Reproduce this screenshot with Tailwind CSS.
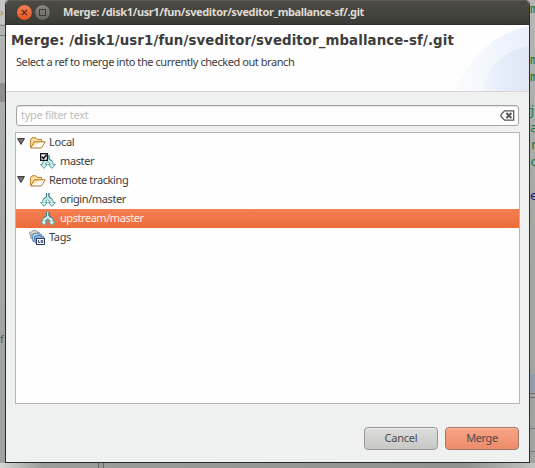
<!DOCTYPE html>
<html lang="en">
<head>
<meta charset="utf-8">
<title>Merge</title>
<script src="https://cdn.jsdelivr.net/npm/@tailwindcss/browser@4"></script>
</head>
<body class="relative h-[468px] w-[535px] overflow-hidden bg-[#a6a8a6] font-['Noto_Sans','Open_Sans',sans-serif] text-[11px] text-[#3c3c3c]">

<!-- Editor window behind the dialog -->
<div class="absolute inset-0 bg-linear-to-b from-[#b4b6b4] via-[#a4a6a4] to-[#a0a2a0]">
  <div class="absolute left-0 top-0 h-[24px] w-[5px] bg-[#c4c5c4]"></div>
  <div class="absolute left-0 top-[25px] h-px w-[5px] bg-[#858585]"></div>
  <div class="absolute left-0 top-[35px] h-px w-[5px] bg-[#777]"></div>
  <div class="absolute left-0 top-[83px] h-[19px] w-[5px] bg-[#8e8f8e]"></div>
  <div class="absolute left-0 top-[3px] leading-[18px] text-[#b87c28]">›</div>
  <div class="absolute left-0 top-[331px] text-[11px] leading-[15px] text-[#555]">f</div>
  <div class="absolute right-0 top-0 h-[468px] w-[6px] overflow-hidden font-['DejaVu_Sans_Mono',monospace] text-[13px] leading-[17px] text-[#157a38]">
    <div class="absolute left-px top-0">m</div>
    <div class="absolute left-px top-[51px]">m</div>
    <div class="absolute left-px top-[68px]">m</div>
    <div class="absolute -left-px top-[102px]">j</div>
    <div class="absolute left-px top-[119px]">a</div>
    <div class="absolute left-px top-[136px]">r</div>
    <div class="absolute left-px top-[153px]">c</div>
    <div class="absolute left-px top-[187px] text-[#1a1a80]">e</div>
    <div class="absolute left-0 top-[374px] h-[18px] w-[6px] bg-[#8e9cab]"></div>
    <div class="absolute left-0 top-[393px] h-[5px] w-[6px] border-y border-[#6b6b6b]"></div>
    <div class="absolute left-0 top-[428px] h-[24px] w-[6px] border-y border-[#777]"></div>
  </div>
  <div class="absolute bottom-0 left-0 h-[5px] w-[535px] bg-linear-to-r from-[#d4d6d4] via-[#9b9d9b] via-8% to-[#8f918f]"></div>
  <div class="absolute bottom-0 right-0 h-[5px] w-[70px] bg-linear-to-r from-[#8f918f]/0 to-[#c2c4c2]"></div>
  <div class="absolute bottom-0 left-[98px] h-[5px] w-[6px] border-x border-[#666]"></div>
</div>

<!-- Merge dialog -->
<div class="relative ml-[5px] flex h-[463px] w-[525px] flex-col overflow-hidden rounded-t-[5px] border-x border-b border-[#2b2c2a] bg-[#eff1f0]">
  <div class="flex h-[25px] shrink-0 items-center border-b border-[#30312e] bg-linear-to-b from-[#4c4b45] via-[#45453f] to-[#3a3a36] shadow-[inset_0_1px_0_#5d5c55]">
    <svg class="ml-[10px] h-[17px] w-[35px] shrink-0" viewBox="0 0 35 17" fill="none">
      <defs>
        <linearGradient id="close" x1="0" y1="0" x2="0" y2="1"><stop stop-color="#f58258"/><stop offset="1" stop-color="#e8541f"/></linearGradient>
        <linearGradient id="max" x1="0" y1="0" x2="0" y2="1"><stop stop-color="#8a887f"/><stop offset="1" stop-color="#68665f"/></linearGradient>
      </defs>
      <circle cx="8.4" cy="8.5" r="7.9" fill="url(#close)" stroke="#35342f" stroke-width=".8"/>
      <path d="M5.8 5.9l5.2 5.2M11 5.9l-5.2 5.2" stroke="#4a2a1b" stroke-width="1.3"/>
      <circle cx="26.5" cy="8.5" r="7.9" fill="url(#max)" stroke="#35342f" stroke-width=".8"/>
      <rect x="23.5" y="5.5" width="6" height="6" stroke="#3c3b36"/>
    </svg>
    <span class="ml-[12px] whitespace-nowrap text-[11px] font-bold leading-[16px] tracking-[-0.38px] text-[#dfdbd2]">Merge: /disk1/usr1/fun/sveditor/sveditor_mballance-sf/.git</span>
  </div>

  <header class="relative h-[67px] shrink-0 border-b border-[#dcd3d6] bg-[#fefefe]">
    <svg class="absolute right-0 top-0 h-[66px] w-[76px]" viewBox="0 0 76 66">
      <defs>
        <linearGradient id="outer"><stop stop-color="#fafcfe"/><stop offset=".5" stop-color="#f2f6fd"/><stop offset="1" stop-color="#e9effb"/></linearGradient>
        <linearGradient id="inner"><stop stop-color="#f0f5fd"/><stop offset=".5" stop-color="#e4ebf9"/><stop offset="1" stop-color="#dfe6f6"/></linearGradient>
      </defs>
      <path d="M2 66C15 35 39 9 76 1v65z" fill="url(#outer)"/>
      <path d="M30 66C33 42 51 25 76 21v45z" fill="url(#inner)"/>
    </svg>
    <h1 class="relative pl-[5px] pt-[7px] font-['DejaVu_Sans',sans-serif] text-[13.33px] font-bold leading-[17px] tracking-[0.1px] whitespace-nowrap text-[#3c3c3c]">Merge: /disk1/usr1/fun/sveditor/sveditor_mballance-sf/.git</h1>
    <p class="relative pl-[10px] pt-[5px] text-[11px] leading-[16px] tracking-[-0.43px] whitespace-nowrap">Select a ref to merge into the currently checked out branch</p>
  </header>

  <main class="flex flex-1 flex-col px-[9px] pt-[13px]">
    <div class="ml-px flex h-[21px] w-[503px] items-center justify-between rounded-[3px] border border-[#a8a3a2] bg-[#fefefe] pl-[4px] pr-[3px] shadow-[inset_0_1px_0_#e4e2e1]">
      <span class="mb-px text-[11px] leading-[16px] tracking-[-0.3px] text-[#c1bdbc]">type filter text</span>
      <svg class="h-[11px] w-[15px]" viewBox="0 0 15 11" fill="none">
        <path d="M4.5.8h9.2v9.4H4.5L1 6.5v-2z" stroke="#555" stroke-width="1.2"/>
        <path d="M6.4 3l5 5M11.4 3l-5 5" stroke="#555" stroke-width="2"/>
      </svg>
    </div>

    <svg class="hidden">
      <defs>
        <linearGradient id="gold" x1="0" y1="0" x2="0" y2="1"><stop stop-color="#fff0b8"/><stop offset="1" stop-color="#efb95a"/></linearGradient>
      </defs>
      <symbol id="folder" viewBox="0 0 16 12">
        <path d="M.6 10.5V2.6L2 .8h4l1.4 1.6h4.2v2.4" fill="#ffe0a0" stroke="#bb7c2b"/>
        <path d="M.8 11L4.2 4.8h11L11.4 11z" fill="url(#gold)" stroke="#b6772a"/>
      </symbol>
      <symbol id="branch" viewBox="0 0 16 14">
        <path d="M6.5 0v4L3 6.2 2.4 9.5H.5L4 13.4l3.3-3.9H5.4L6 8l1.8-1.3L9.5 8l.7 1.5H8.4l3.4 3.9 3.7-3.9h-2.2l-.8-3.3L9 4V0z" fill="#cdeeed"/>
        <path d="M6.5 0v4L3 6.2 2.4 9.5H.5L4 13.4l3.3-3.9H5.4L6 8l1.8-1.3L9.5 8l.7 1.5H8.4l3.4 3.9 3.7-3.9h-2.2l-.8-3.3L9 4V0" fill="none" stroke="#5b9c9c" stroke-width=".95"/>
        <path d="M6.5 0v4L3.5 6M9 0v4l3 2" fill="none" stroke="#2f7378" stroke-width=".9"/>
      </symbol>
      <symbol id="triangle" viewBox="0 0 8 7">
        <path d="M.6.6h6.8L4 6.4z" fill="#777" stroke="#333"/>
      </symbol>
    </svg>

    <div class="mt-[6px] h-[272px] w-[505px] border border-[#b9b5b4] bg-[#fefefe] tracking-[-0.38px]">
      <div class="flex h-[19px] items-center pl-px">
        <svg class="h-[7px] w-[8px] -translate-y-px"><use href="#triangle"/></svg>
        <svg class="ml-[5px] h-[12px] w-[16px]"><use href="#folder"/></svg>
        <span class="mb-[2px] ml-[3px] leading-[16px] tracking-[-0.25px]">Local</span>
      </div>
      <div class="flex h-[19px] items-center pl-[24px]">
        <svg class="h-[15px] w-[16px] overflow-visible" viewBox="0 0 16 15">
          <use href="#branch" y="1" width="16" height="14"/>
          <rect x="0" y="-1" width="8" height="8" fill="#15161f"/>
          <rect x="1.3" y=".3" width="5.4" height="5.4" fill="#fff"/>
          <path d="M1.8 2.6l1.7 2L6.5.8" fill="none" stroke="#15161f" stroke-width="1.6"/>
        </svg>
        <span class="mb-[2px] ml-[4px] leading-[16px]">master</span>
      </div>
      <div class="flex h-[19px] items-center pl-px">
        <svg class="h-[7px] w-[8px] -translate-y-px"><use href="#triangle"/></svg>
        <svg class="ml-[5px] h-[12px] w-[16px]"><use href="#folder"/></svg>
        <span class="mb-[2px] ml-[3px] leading-[16px] whitespace-nowrap">Remote tracking</span>
      </div>
      <div class="flex h-[19px] items-center pl-[24px]">
        <svg class="h-[14px] w-[16px]"><use href="#branch"/></svg>
        <span class="mb-[2px] ml-[4px] leading-[16px]">origin/master</span>
      </div>
      <div class="flex h-[19px] items-center bg-linear-to-b from-[#f58053] to-[#eb6b3b] pl-[24px]">
        <svg class="h-[14px] w-[16px]"><use href="#branch"/></svg>
        <span class="mb-[2px] ml-[4px] leading-[16px] tracking-[-0.45px] text-[#fff0e8]">upstream/master</span>
      </div>
      <div class="flex h-[19px] items-center pl-[13px]">
        <svg class="h-[15px] w-[16px]" viewBox="0 0 16 15">
          <path d="M.5 2.2h2L3.5.7h4l1 1.5h1.8v1.6H4L3 8.5H2z" fill="#f0d8bd" stroke="#7f93ad" stroke-width=".9"/>
          <path d="M2.8 4.4h2l.8-1.2h3.6l1 1.2h2.3V6H6l-.8 5.5H4z" fill="#b9dbf0" stroke="#4a79ad" stroke-width=".9"/>
          <path d="M5.2 6.6h2l.8-1h2.8l.9 1h3v6.5H6.4z" fill="#8dbde2" stroke="#4a79ad" stroke-width=".9"/>
          <rect x="7.5" y="8.5" width="8" height="6" fill="#fff" stroke="#293a69"/>
          <path d="M9.5 10v2.5h1.7M12.2 10.5h1.6v2h-1.6z" fill="none" stroke="#293a69" stroke-width=".9"/>
        </svg>
        <span class="mb-[2px] ml-[4px] leading-[16px]">Tags</span>
      </div>
    </div>

    <div class="mr-px mt-[23px] flex justify-end gap-[7px] text-[11px] text-[#4b4b4b]">
      <button class="h-[23px] w-[74px] rounded-[4px] border border-[#989694] bg-linear-to-b from-[#dededc] to-[#c7c8c6] pb-px tracking-[-0.2px] shadow-[inset_0_1px_0_#eeeeed]">Cancel</button>
      <button class="h-[23px] w-[74px] rounded-[4px] border border-[#a47468] bg-linear-to-b from-[#f7a486] to-[#ec8b69] pb-px tracking-[-0.4px] shadow-[inset_0_1px_0_#fbb9a0]">Merge</button>
    </div>
  </main>
</div>
</body>
</html>
